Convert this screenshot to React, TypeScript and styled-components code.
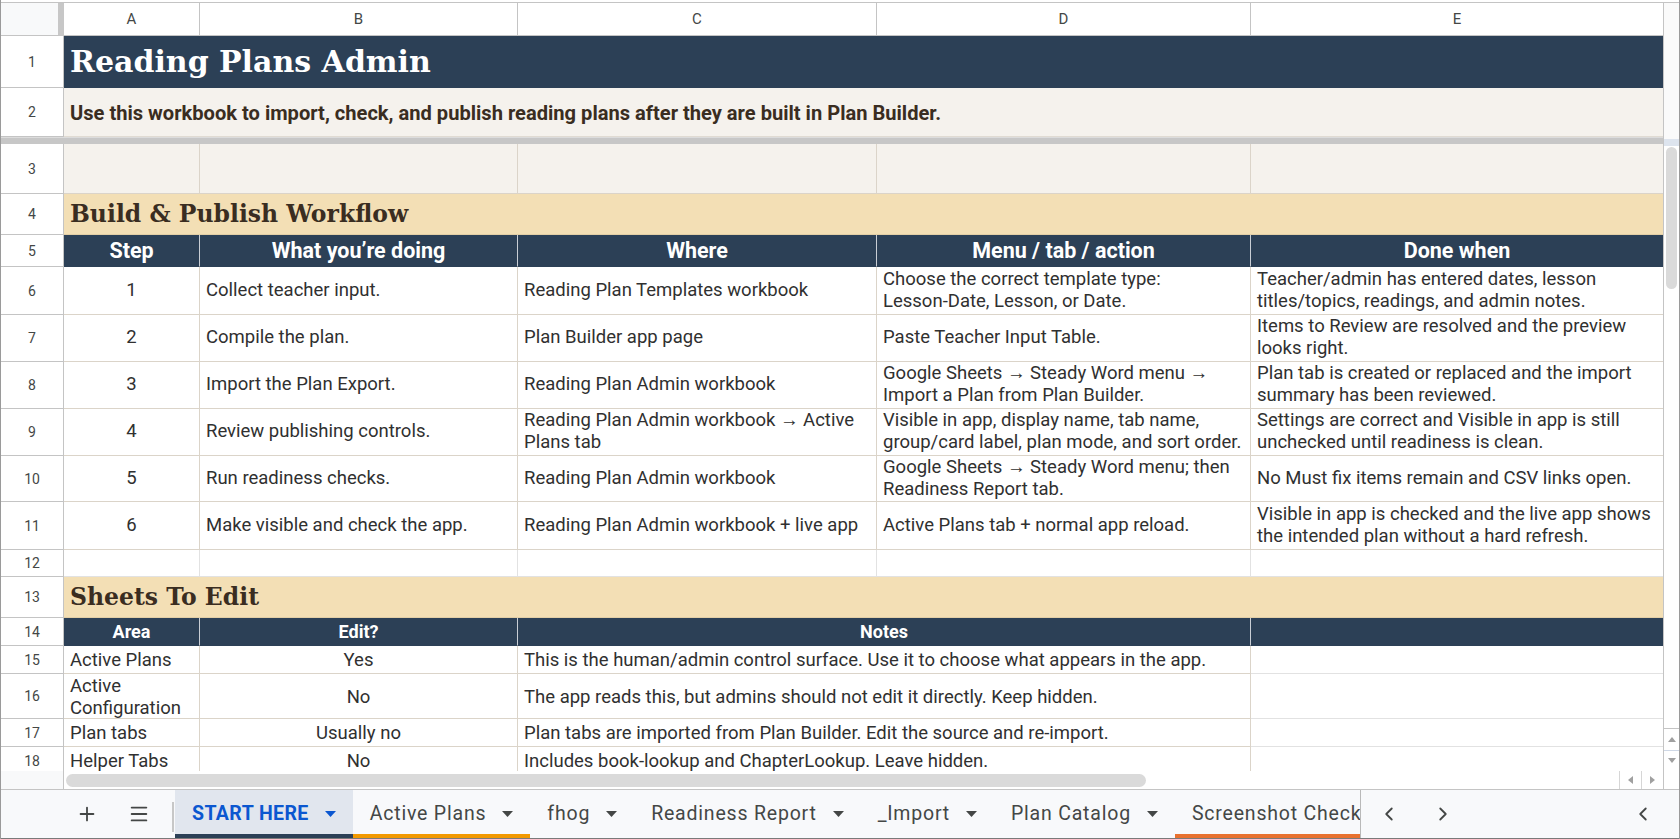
import styled, { createGlobalStyle } from "styled-components";
import { Plus, Menu, ChevronLeft, ChevronRight } from "lucide-react";

//#region  palette

const Colors = {
    navy: "#2c4056",
    beige: "#f5f2ed",
    wheat: "#f3dfb5",
    brown: "#3a2d21",
    ink: "#303030",
    cellLine: "#dbd4c9",
    softLine: "#e2e2e2",
    chrome: "#c4c4c4",
    chromeText: "#444746",
    frozen: "#c7c7c7",
    thumb: "#dadada",
    tabBg: "#f8f9fb",
    activeTab: "#e1e6ee",
    blue: "#0b57d0",
    orange: "#f29900",
    rust: "#e8712f",
};

const COLS = "63px 136px 318px 359px 374px 413px";
const SANS = "Roboto, 'Liberation Sans', Arial, sans-serif";
const SERIF = "'DejaVu Serif', 'Liberation Serif', Georgia, serif";

//#endregion

//#region  styled css

const GlobalStyle = createGlobalStyle`
    html, body { margin: 0; padding: 0; background: #fff; overflow: hidden; }
    body { font-family: ${SANS}; }
    * { box-sizing: border-box; }
`;

const Sheet = styled.div`
    width: 1680px;
    height: 839px;
    display: flex;
    flex-direction: column;
    padding-top: 2px;
    border-left: 1px solid #9a9a9a;
    border-right: 1px solid #9a9a9a;
    background: #fff;
`;

const Workspace = styled.div`
    flex: 1;
    min-height: 0;
    display: flex;
`;

const GridPane = styled.div`
    flex: 1;
    min-width: 0;
    display: flex;
    flex-direction: column;
    overflow: hidden;
`;

const GridRow = styled.div<{ $h: number }>`
    display: grid;
    grid-template-columns: ${COLS};
    height: ${(p) => p.$h}px;
    flex: none;
`;

const ColumnHeadRow = styled(GridRow)`
    border-top: 1px solid ${Colors.chrome};
`;

const Corner = styled.div`
    background: #f8f9fa;
    border-right: 6px solid ${Colors.frozen};
    border-bottom: 1px solid ${Colors.chrome};
`;

const ColLetter = styled.div`
    display: flex;
    align-items: center;
    justify-content: center;
    border-right: 1px solid ${Colors.chrome};
    border-bottom: 1px solid ${Colors.chrome};
    font-size: 15px;
    color: ${Colors.chromeText};
`;

const RowNum = styled.div`
    display: flex;
    align-items: center;
    justify-content: center;
    background: #fff;
    border-right: 1px solid ${Colors.chrome};
    border-bottom: 1px solid ${Colors.chrome};
    font-size: 14px;
    color: ${Colors.chromeText};
`;

const Cell = styled.div<{ $span?: number; $bg?: string; $line?: string; $center?: boolean; $low?: boolean }>`
    grid-column: span ${(p) => p.$span ?? 1};
    display: flex;
    align-items: center;
    justify-content: ${(p) => (p.$center ? "center" : "flex-start")};
    text-align: ${(p) => (p.$center ? "center" : "left")};
    padding: ${(p) => (p.$low ? "3px 6px 0" : "0 6px")};
    overflow: hidden;
    background: ${(p) => p.$bg ?? "#fff"};
    border-right: 1px solid ${(p) => p.$line ?? Colors.cellLine};
    border-bottom: 1px solid ${(p) => p.$line ?? Colors.cellLine};
    font-size: 18.5px;
    line-height: 21.6px;
    color: ${Colors.ink};
`;

const CellText = styled.div`
    min-width: 0;
`;

const NoBreak = styled.span`
    white-space: nowrap;
`;

const TitleCell = styled(Cell)`
    background: ${Colors.navy};
    border-color: ${Colors.navy};
    font-family: ${SERIF};
    font-weight: 700;
    font-size: 30px;
    line-height: 36px;
    color: #fff;
    white-space: nowrap;
`;

const IntroCell = styled(Cell)`
    background: ${Colors.beige};
    border-color: #e0dbd3;
    padding-top: 3px;
    font-weight: 700;
    font-size: 20.1px;
    color: ${Colors.brown};
    white-space: nowrap;
`;

const SectionCell = styled(Cell)`
    background: ${Colors.wheat};
    border-color: #e3cfa6;
    font-family: ${SERIF};
    font-weight: 700;
    font-size: 23.5px;
    line-height: 30px;
    color: ${Colors.brown};
    white-space: nowrap;
`;

const HeadCell = styled(Cell)<{ $small?: boolean }>`
    background: ${Colors.navy};
    border-right-color: #c9ced5;
    border-bottom-color: ${Colors.navy};
    justify-content: center;
    font-weight: 700;
    font-size: ${(p) => (p.$small ? "18px" : "21.5px")};
    color: #fff;
    white-space: nowrap;
`;

const FrozenBar = styled.div`
    height: 7px;
    flex: none;
    border-top: 1px solid #dcdcdc;
    background: ${Colors.frozen};
`;

const ScrollBody = styled.div`
    flex: 1;
    min-height: 0;
    overflow: hidden;
`;

const VScroll = styled.div`
    width: 16px;
    flex: none;
    display: flex;
    flex-direction: column;
    border-left: 1px solid ${Colors.chrome};
    background: #fafafa;
`;

const VScrollFrozen = styled.div`
    height: 137px;
    flex: none;
    border-top: 1px solid ${Colors.chrome};
`;

const VScrollSplit = styled.div`
    height: 7px;
    flex: none;
    background: #dde4ee;
`;

const VTrack = styled.div`
    flex: 1;
    padding: 1px 2px 0 2px;
    background: #fff;
`;

const VThumb = styled.div`
    height: 142px;
    border-radius: 7px;
    background: ${Colors.thumb};
`;

const VArrows = styled.div`
    height: 43px;
    flex: none;
    display: flex;
    flex-direction: column;
    border-top: 1px solid ${Colors.chrome};
    background: #fff;
`;

const ArrowBox = styled.div`
    flex: 1;
    display: flex;
    align-items: center;
    justify-content: center;
    & + & { border-top: 1px solid #cfd8e6; }
`;

const HScroll = styled.div`
    height: 18px;
    flex: none;
    display: flex;
    align-items: center;
    background: #fff;
`;

const HScrollLead = styled.div`
    width: 63px;
    height: 100%;
    flex: none;
    background: #f8f9fa;
    border-right: 1px solid ${Colors.chrome};
`;

const HTrack = styled.div`
    flex: 1;
    height: 100%;
    display: flex;
    align-items: center;
    padding-left: 2px;
`;

const HThumb = styled.div`
    width: 1080px;
    height: 13px;
    border-radius: 7px;
    background: ${Colors.thumb};
`;

const HArrow = styled.div`
    width: 22px;
    height: 100%;
    display: flex;
    align-items: center;
    justify-content: center;
    border-left: 1px solid #d6d6d6;
`;

const HCorner = styled.div`
    width: 16px;
    height: 100%;
    flex: none;
    border-left: 1px solid ${Colors.chrome};
`;

const TabBar = styled.div`
    height: 50px;
    flex: none;
    display: flex;
    align-items: stretch;
    padding-left: 60px;
    background: ${Colors.tabBg};
    border-top: 1px solid ${Colors.chrome};
    border-bottom: 1px solid #7a7a7a;
    color: ${Colors.chromeText};
`;

const BarButton = styled.div<{ $w?: number }>`
    width: ${(p) => p.$w ?? 52}px;
    flex: none;
    display: flex;
    align-items: center;
    justify-content: center;
    color: ${Colors.chromeText};
`;

const BarDivider = styled.div`
    width: 2px;
    margin: 12px 0 6px 7px;
    background: #c7c7c7;
    flex: none;
`;

const TabStrip = styled.div`
    width: 1186px;
    flex: none;
    display: flex;
    overflow: hidden;
    margin-left: 1px;
    border-right: 1px solid #b9b9b9;
`;

const Tab = styled.div<{ $active?: boolean; $stripe?: string }>`
    flex: none;
    display: flex;
    align-items: center;
    gap: 16px;
    padding: 3px 17px 0;
    background: ${(p) => (p.$active ? Colors.activeTab : "transparent")};
    border-bottom: 4px solid ${(p) => p.$stripe ?? "transparent"};
    font-size: 19.5px;
    font-weight: ${(p) => (p.$active ? 700 : 400)};
    letter-spacing: ${(p) => (p.$active ? "0.4px" : "0.8px")};
    color: ${(p) => (p.$active ? Colors.blue : Colors.chromeText)};
    white-space: nowrap;
`;

const Spacer = styled.div`
    flex: 1;
`;

//#endregion

const Caret = ({ color }: { color: string }) => (
    <svg width="11" height="6" viewBox="0 0 11 6">
        <polygon points="0,0 11,0 5.5,6" fill={color} />
    </svg>
);

const Tri = ({ dir }: { dir: "up" | "down" | "left" | "right" }) => {
    const pts = {
        up: "0,5 8,5 4,0",
        down: "0,0 8,0 4,5",
        left: "5,0 5,8 0,4",
        right: "0,0 0,8 5,4",
    }[dir];
    const w = dir === "up" || dir === "down" ? 8 : 5;
    const h = dir === "up" || dir === "down" ? 5 : 8;
    return (
        <svg width={w} height={h} viewBox={`0 0 ${w} ${h}`}>
            <polygon points={pts} fill="#a0a0a0" />
        </svg>
    );
};

const workflow = [
    {
        n: "1", h: 48,
        what: "Collect teacher input.",
        where: "Reading Plan Templates workbook",
        menu: <>Choose the correct template type: <NoBreak>Lesson-Date,</NoBreak> Lesson, or Date.</>,
        done: "Teacher/admin has entered dates, lesson titles/topics, readings, and admin notes.",
    },
    {
        n: "2", h: 47,
        what: "Compile the plan.",
        where: "Plan Builder app page",
        menu: "Paste Teacher Input Table.",
        done: "Items to Review are resolved and the preview looks right.",
    },
    {
        n: "3", h: 47,
        what: "Import the Plan Export.",
        where: "Reading Plan Admin workbook",
        menu: "Google Sheets \u2192 Steady Word menu \u2192 Import a Plan from Plan Builder.",
        done: "Plan tab is created or replaced and the import summary has been reviewed.",
    },
    {
        n: "4", h: 47,
        what: "Review publishing controls.",
        where: "Reading Plan Admin workbook \u2192 Active Plans tab",
        menu: "Visible in app, display name, tab name, group/card label, plan mode, and sort order.",
        done: "Settings are correct and Visible in app is still unchecked until readiness is clean.",
    },
    {
        n: "5", h: 46,
        what: "Run readiness checks.",
        where: "Reading Plan Admin workbook",
        menu: "Google Sheets \u2192 Steady Word menu; then Readiness Report tab.",
        done: "No Must fix items remain and CSV links open.",
    },
    {
        n: "6", h: 48,
        what: "Make visible and check the app.",
        where: "Reading Plan Admin workbook + live app",
        menu: "Active Plans tab + normal app reload.",
        done: "Visible in app is checked and the live app shows the intended plan without a hard refresh.",
    },
];

const sheets = [
    { n: "15", h: 28, area: "Active Plans", edit: "Yes", notes: "This is the human/admin control surface. Use it to choose what appears in the app." },
    { n: "16", h: 45, area: "Active Configuration", edit: "No", notes: "The app reads this, but admins should not edit it directly. Keep hidden." },
    { n: "17", h: 28, area: "Plan tabs", edit: "Usually no", notes: "Plan tabs are imported from Plan Builder. Edit the source and re-import." },
    { n: "18", h: 28, area: "Helper Tabs", edit: "No", notes: "Includes book-lookup and ChapterLookup. Leave hidden." },
];

const tabs = [
    { label: "START HERE", active: true, stripe: Colors.navy },
    { label: "Active Plans", stripe: Colors.orange },
    { label: "fhog" },
    { label: "Readiness Report" },
    { label: "_Import" },
    { label: "Plan Catalog" },
    { label: "Screenshot Checklist", stripe: Colors.rust, noCaret: true },
];

const App = () => {
    return (
        <>
            <GlobalStyle />
            <Sheet>
                <Workspace>
                    <GridPane>
                        <ColumnHeadRow $h={34}>
                            <Corner />
                            {["A", "B", "C", "D", "E"].map((l) => (
                                <ColLetter key={l}>{l}</ColLetter>
                            ))}
                        </ColumnHeadRow>

                        <GridRow $h={52}>
                            <RowNum>1</RowNum>
                            <TitleCell $span={5}>Reading Plans Admin</TitleCell>
                        </GridRow>
                        <GridRow $h={49}>
                            <RowNum>2</RowNum>
                            <IntroCell $span={5}>
                                Use this workbook to import, check, and publish reading plans after they are built in Plan Builder.
                            </IntroCell>
                        </GridRow>

                        <FrozenBar />

                        <ScrollBody>
                            <GridRow $h={50}>
                                <RowNum>3</RowNum>
                                {[0, 1, 2, 3, 4].map((i) => (
                                    <Cell key={i} $bg={Colors.beige} />
                                ))}
                            </GridRow>
                            <GridRow $h={41}>
                                <RowNum>4</RowNum>
                                <SectionCell $span={5}>Build &amp; Publish Workflow</SectionCell>
                            </GridRow>
                            <GridRow $h={32}>
                                <RowNum>5</RowNum>
                                <HeadCell>Step</HeadCell>
                                <HeadCell>What you’re doing</HeadCell>
                                <HeadCell>Where</HeadCell>
                                <HeadCell>Menu / tab / action</HeadCell>
                                <HeadCell>Done when</HeadCell>
                            </GridRow>
                            {workflow.map((r, i) => (
                                <GridRow key={r.n} $h={r.h}>
                                    <RowNum>{i + 6}</RowNum>
                                    <Cell $center>{r.n}</Cell>
                                    <Cell><CellText>{r.what}</CellText></Cell>
                                    <Cell><CellText>{r.where}</CellText></Cell>
                                    <Cell><CellText>{r.menu}</CellText></Cell>
                                    <Cell><CellText>{r.done}</CellText></Cell>
                                </GridRow>
                            ))}
                            <GridRow $h={27}>
                                <RowNum>12</RowNum>
                                {[0, 1, 2, 3, 4].map((i) => (
                                    <Cell key={i} $line={Colors.softLine} />
                                ))}
                            </GridRow>
                            <GridRow $h={41}>
                                <RowNum>13</RowNum>
                                <SectionCell $span={5}>Sheets To Edit</SectionCell>
                            </GridRow>
                            <GridRow $h={28}>
                                <RowNum>14</RowNum>
                                <HeadCell $small>Area</HeadCell>
                                <HeadCell $small>Edit?</HeadCell>
                                <HeadCell $small $span={2}>Notes</HeadCell>
                                <HeadCell $small />
                            </GridRow>
                            {sheets.map((r) => (
                                <GridRow key={r.n} $h={r.h}>
                                    <RowNum>{r.n}</RowNum>
                                    <Cell $low><CellText>{r.area}</CellText></Cell>
                                    <Cell $low $center>{r.edit}</Cell>
                                    <Cell $low $span={2}><CellText>{r.notes}</CellText></Cell>
                                    <Cell $line={Colors.softLine} />
                                </GridRow>
                            ))}
                        </ScrollBody>
                    </GridPane>

                    <VScroll>
                        <VScrollFrozen />
                        <VScrollSplit />
                        <VTrack>
                            <VThumb />
                        </VTrack>
                        <VArrows>
                            <ArrowBox><Tri dir="up" /></ArrowBox>
                            <ArrowBox><Tri dir="down" /></ArrowBox>
                        </VArrows>
                    </VScroll>
                </Workspace>

                <HScroll>
                    <HScrollLead />
                    <HTrack>
                        <HThumb />
                        <Spacer />
                        <HArrow><Tri dir="left" /></HArrow>
                        <HArrow><Tri dir="right" /></HArrow>
                    </HTrack>
                    <HCorner />
                </HScroll>

                <TabBar>
                    <BarButton><Plus size={22} strokeWidth={2} /></BarButton>
                    <BarButton><Menu size={22} strokeWidth={2} /></BarButton>
                    <BarDivider />
                    <TabStrip>
                        {tabs.map((t) => (
                            <Tab key={t.label} $active={t.active} $stripe={t.stripe}>
                                {t.label}
                                {!t.noCaret && <Caret color={t.active ? Colors.blue : Colors.chromeText} />}
                            </Tab>
                        ))}
                    </TabStrip>
                    <BarButton $w={56}><ChevronLeft size={22} strokeWidth={2} /></BarButton>
                    <BarButton $w={52}><ChevronRight size={22} strokeWidth={2} /></BarButton>
                    <Spacer />
                    <BarButton $w={52}><ChevronLeft size={22} strokeWidth={2} /></BarButton>
                    <BarButton $w={10} />
                </TabBar>
            </Sheet>
        </>
    );
};

export default App;
